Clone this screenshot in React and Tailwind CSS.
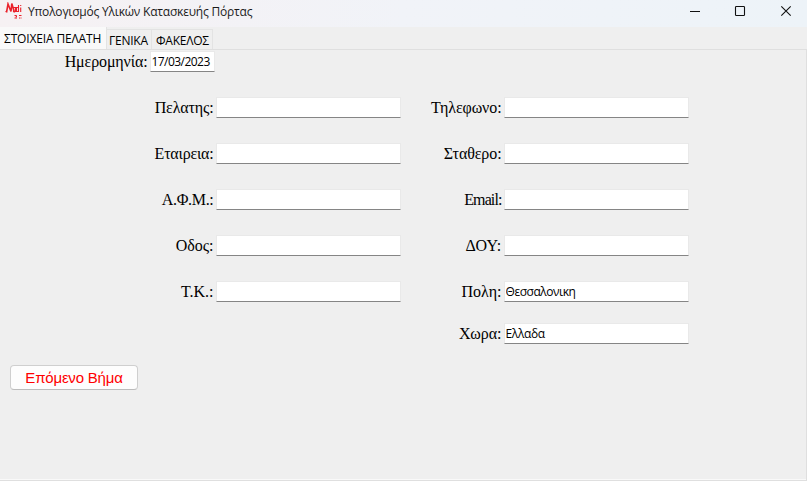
const ui = "font-['Open_Sans','Noto_Sans',sans-serif]";
const serif = "font-['Liberation_Serif',serif]";

function Logo() {
  return (
    <svg width="18" height="18" viewBox="0 0 18 18" fill="none" stroke="#ea222b" aria-hidden="true">
      <path d="M1.5 10.5 L3 2 L6 9.5 L6.8 1.5 L9.5 10.5" strokeWidth="1.6" />
      <path d="M0.5 9.5 L2 8" strokeWidth="1" />
      <path d="M8.5 5.5h2v4h-2zM13.5 3v6.5h-2v-4h2M15.7 5.5v4.5M15.7 3v1" strokeWidth="1.1" />
      <path d="M9.5 13.5h2v1.5h-1M9.5 16h2.5M14 13.5h2.5M14 16h1M15.5 16h1" strokeWidth="1" />
    </svg>
  );
}

function TitleBar() {
  return (
    <header className="flex h-[27px] shrink-0 items-start bg-linear-to-r from-[#f6f1f3] via-[#f1f3f8] to-[#edf3f8]">
      <div className="pl-[5px] pt-[2px]"><Logo /></div>
      <h1 className={`${ui} ml-[5px] mt-[3px] whitespace-nowrap text-[12px] leading-[18px] tracking-[-0.2px] text-[#1b1b1b]`}>
        Υπολογισμός Υλικών Κατασκευής Πόρτας
      </h1>
      <div className="ml-auto flex pr-[15px] pt-[5px]">
        <svg width="102" height="13" viewBox="0 0 102 13" fill="none" stroke="#111" aria-hidden="true">
          <path d="M0 6.5h10" />
          <rect x="45.5" y="1.5" width="9" height="9" rx="0.8" strokeWidth="1.1" />
          <path d="M91.3 1.3l9.4 9.4M100.7 1.3l-9.4 9.4" strokeWidth="1.1" />
        </svg>
      </div>
    </header>
  );
}

function Tabs() {
  return (
    <nav className={`${ui} flex h-[22px] shrink-0 items-end whitespace-nowrap text-[12px] leading-[18px] text-black`}>
      <div className="relative z-10 h-[22px] w-[107px] border-r border-[#e3e3e3] bg-[#f9f9f9] pl-[4px] pt-[3px] tracking-[-0.15px]">ΣΤΟΙΧΕΙΑ ΠΕΛΑΤΗ</div>
      <div className="h-5 w-[45px] border-r border-t border-[#e3e3e3] pl-[2px] pt-[2px] tracking-[-0.25px]">ΓΕΝΙΚΑ</div>
      <div className="h-5 w-[61px] border-r border-t border-[#e3e3e3] pl-[4px] pt-[2px] tracking-[-0.25px]">ΦΑΚΕΛΟΣ</div>
    </nav>
  );
}

function Field({ label, value = "", labelClass = "", wide = true, valueClass = "" }) {
  return (
    <label className="flex h-[21px] items-center justify-end gap-[2px]">
      <span className={`${serif} whitespace-nowrap text-[16px] leading-[20px] text-black ${labelClass}`}>{label}</span>
      <input
        readOnly
        value={value}
        className={`${ui} ${wide ? "w-[185px]" : "w-[65px]"} h-[21px] shrink-0 border border-[#e9e9e9] border-b-[#858585] bg-white pl-px text-[12px] leading-[18px] text-black outline-none ${valueClass}`}
      />
    </label>
  );
}

export default function App() {
  return (
    <div className="flex h-[481px] w-[807px] flex-col overflow-hidden bg-[#efefef]">
      <TitleBar />
      <Tabs />
      <main className="flex-1 border-b border-r border-t border-[#dfdfdf]">
        <div className="flex h-[430px] flex-col border-b border-[#f9f9f9] pt-px">
          <div className="flex w-[214.5px] justify-end">
            <Field label="Ημερομηνία:" value="17/03/2023" wide={false} labelClass="tracking-[-0.12px]" valueClass="tracking-[-0.55px]" />
          </div>
          <div className="mt-[25px] flex">
            <div className="flex w-[400.5px] flex-col gap-[25px]">
              <Field label="Πελατης:" labelClass="tracking-[-0.15px]" />
              <Field label="Εταιρεια:" labelClass="tracking-[-0.2px]" />
              <Field label="Α.Φ.Μ.:" labelClass="tracking-[-0.3px]" />
              <Field label="Οδος:" />
              <Field label="Τ.Κ.:" />
            </div>
            <div className="flex w-[288px] flex-col gap-[25px]">
              <Field label="Τηλεφωνο:" labelClass="tracking-[-0.1px]" />
              <Field label="Σταθερο:" labelClass="tracking-[-0.1px]" />
              <Field label="Email:" labelClass="tracking-[-0.9px]" />
              <Field label="ΔΟΥ:" labelClass="tracking-[0.2px]" />
              <div className="flex flex-col gap-[21px]">
                <Field label="Πολη:" value="Θεσσαλονικη" valueClass="tracking-[-0.45px]" />
                <Field label="Χωρα:" value="Ελλαδα" valueClass="tracking-[-0.35px]" />
              </div>
            </div>
          </div>
          <button className="ml-[10px] mt-[21px] h-[25px] w-32 rounded-[4px] border border-[#cfcfcf] border-b-[#bcbcbc] bg-[#fdfdfd] pt-px font-['Liberation_Sans',sans-serif] text-[15px] leading-[20px] tracking-[-0.2px] text-[#ff0000]">
            Επόμενο Βήμα
          </button>
        </div>
      </main>
    </div>
  );
}
